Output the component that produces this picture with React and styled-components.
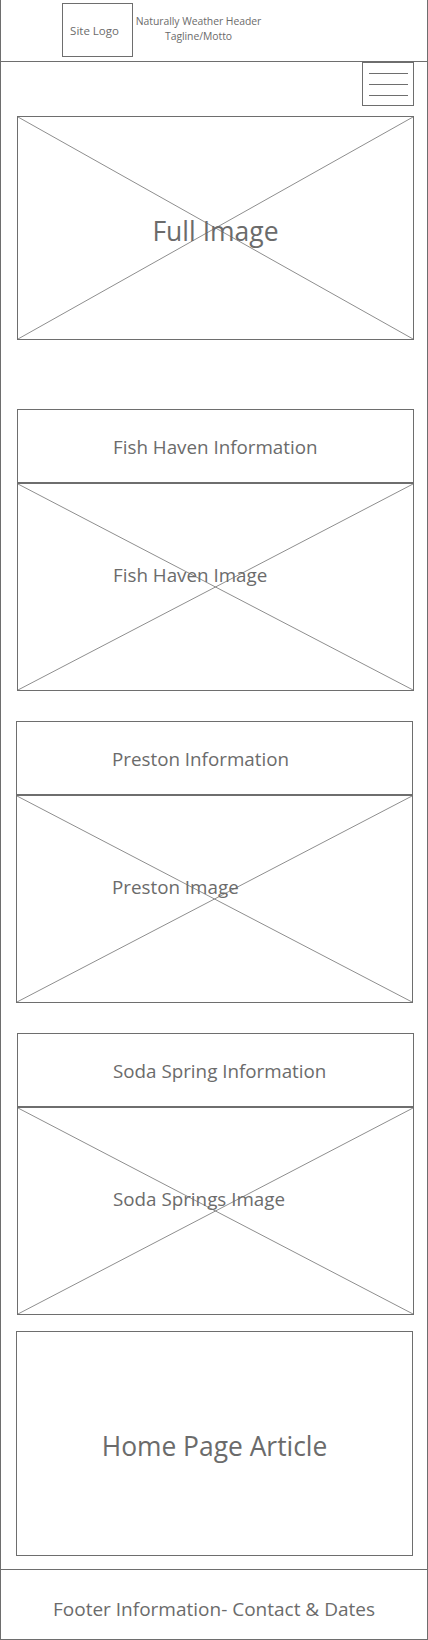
import React from "react";
import styled, { createGlobalStyle } from "styled-components";

const LINE = "#6e6e6e";
const TEXT = "#6b6b6b";
const CROSS = "#8e8e8e";

const Global = createGlobalStyle`
  html, body { margin: 0; padding: 0; background: #fff; }
  body { font-family: "Open Sans", "Noto Sans", sans-serif; color: ${TEXT}; }
  * { box-sizing: border-box; }
`;

const Page = styled.div`
  width: 428px;
  height: 1640px;
  border-left: 1px solid ${LINE};
  border-right: 1px solid ${LINE};
  border-bottom: 1px solid ${LINE};
  display: flex;
  flex-direction: column;
`;

const Header = styled.header`
  height: 62px;
  border-bottom: 1px solid ${LINE};
  display: flex;
  align-items: center;
  padding-left: 61px;
  padding-bottom: 1px;
`;

const Logo = styled.div`
  width: 71px;
  height: 54px;
  border: 1px solid ${LINE};
  display: flex;
  align-items: center;
  justify-content: center;
  font-size: 11.5px;
  padding-right: 6px;
`;

const Brand = styled.div`
  width: 127px;
  margin-left: 2px;
  text-align: center;
  font-size: 10.4px;
  line-height: 15px;
  white-space: nowrap;
  letter-spacing: -0.05px;
  margin-top: -3px;
`;

const Main = styled.main`
  flex: 1;
  display: flex;
  flex-direction: column;
  padding: 0 13px 0 16px;
`;

const NavRow = styled.nav`
  display: flex;
  justify-content: flex-end;
`;

const Burger = styled.button`
  width: 52px;
  height: 44px;
  border: 1px solid ${LINE};
  background: #fff;
  padding: 0;
  display: flex;
  flex-direction: column;
  align-items: center;
  justify-content: center;
  gap: 10px;
`;

const BurgerLine = styled.span`
  display: block;
  width: 39px;
  height: 1px;
  background: ${LINE};
`;

const ImageBox = styled.div`
  position: relative;
  height: ${(p) => p.$h}px;
  margin-top: ${(p) => p.$mt || 0}px;
  border: 1px solid ${LINE};
  display: flex;
  align-items: ${(p) => (p.$top ? "flex-start" : "center")};
  justify-content: ${(p) => (p.$left ? "flex-start" : "center")};
  padding: ${(p) => p.$pad || "0"};
`;

const Cross = styled.svg`
  position: absolute;
  inset: 0;
  width: 100%;
  height: 100%;
  pointer-events: none;
`;

const Caption = styled.span`
  position: relative;
  font-size: ${(p) => p.$size}px;
  line-height: 1;
  white-space: nowrap;
`;

const Card = styled.section`
  display: flex;
  flex-direction: column;
  margin-top: ${(p) => p.$mt}px;
  margin-left: ${(p) => (p.$shift ? -1 : 0)}px;
  margin-right: ${(p) => (p.$shift ? 1 : 0)}px;
`;

const InfoBox = styled.div`
  height: 74px;
  border: 1px solid ${LINE};
  display: flex;
  align-items: center;
  padding: 2px 0 0 95px;
`;

const Article = styled.article`
  height: 225px;
  margin-top: 16px;
  margin-left: -1px;
  margin-right: 1px;
  border: 1px solid ${LINE};
  display: flex;
  align-items: center;
  justify-content: center;
  padding-top: 6px;
`;

const Footer = styled.footer`
  height: 70px;
  margin-top: 13px;
  border-top: 1px solid ${LINE};
  display: flex;
  align-items: center;
  justify-content: center;
  padding-top: 10px;
`;

function X() {
  return (
    <Cross viewBox="0 0 100 100" preserveAspectRatio="none">
      <line x1="0" y1="0" x2="100" y2="100" stroke={CROSS} strokeWidth="1" vectorEffect="non-scaling-stroke" />
      <line x1="100" y1="0" x2="0" y2="100" stroke={CROSS} strokeWidth="1" vectorEffect="non-scaling-stroke" />
    </Cross>
  );
}

const towns = [
  { info: "Fish Haven Information", image: "Fish Haven Image", mt: 69 },
  { info: "Preston Information", image: "Preston Image", mt: 30, shift: true },
  { info: "Soda Spring Information", image: "Soda Springs Image", mt: 30 },
];

export default function App() {
  return (
    <>
      <Global />
      <Page>
        <Header>
          <Logo>Site Logo</Logo>
          <Brand>
            Naturally Weather Header
            <br />
            Tagline/Motto
          </Brand>
        </Header>
        <Main>
          <NavRow>
            <Burger aria-label="menu">
              <BurgerLine />
              <BurgerLine />
              <BurgerLine />
            </Burger>
          </NavRow>
          <ImageBox $h={224} $mt={10} $pad="6px 0 0 0">
            <X />
            <Caption $size={26.5}>Full Image</Caption>
          </ImageBox>
          {towns.map((t) => (
            <Card key={t.info} $mt={t.mt} $shift={t.shift}>
              <InfoBox>
                <Caption $size={18.8}>{t.info}</Caption>
              </InfoBox>
              <ImageBox $h={208} $top $left $pad="82px 0 0 95px">
                <X />
                <Caption $size={18.8}>{t.image}</Caption>
              </ImageBox>
            </Card>
          ))}
          <Article>
            <Caption $size={26.4}>Home Page Article</Caption>
          </Article>
        </Main>
        <Footer>
          <Caption $size={19}>Footer Information- Contact &amp; Dates</Caption>
        </Footer>
      </Page>
    </>
  );
}
